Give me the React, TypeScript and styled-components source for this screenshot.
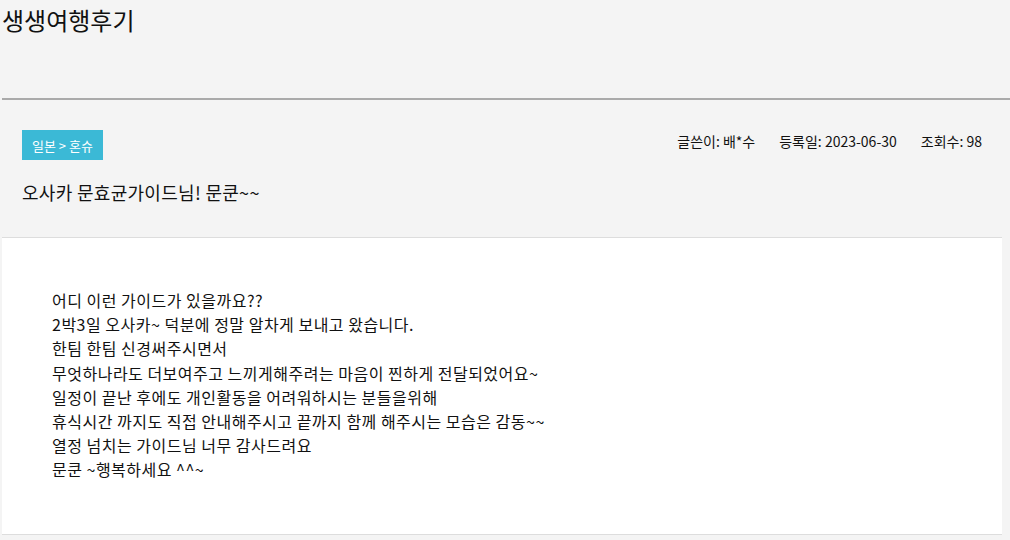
import React from 'react'
import styled, { createGlobalStyle } from 'styled-components'

const GlobalStyle = createGlobalStyle`
  html, body {
    margin: 0;
    padding: 0;
    background: #f4f4f4;
    color: #111;
    font-family: "Noto Sans CJK KR", "Noto Sans", sans-serif;
  }
`

const Page = styled.div`
  width: 1010px;
  padding-left: 2px;
  box-sizing: border-box;
`

const PageTitle = styled.h1`
  margin: 0;
  height: 100px;
  padding-top: 2px;
  box-sizing: border-box;
  font-size: 24px;
  font-weight: 400;
  line-height: 36px;
  border-bottom: 2px solid #aaa;
`

const Board = styled.div`
  width: 1000px;
`

const Info = styled.div`
  padding: 30px 20px 0 20px;
  height: 138px;
  box-sizing: border-box;
  border-bottom: 1px solid #ddd;
`

const InfoTop = styled.div`
  display: flex;
  justify-content: space-between;
  align-items: flex-start;
`

const Category = styled.span`
  display: inline-flex;
  align-items: center;
  height: 30px;
  padding: 0 10px;
  background: #3bb9d6;
  color: #fff;
  font-size: 13px;
`

const Meta = styled.ul`
  display: flex;
  gap: 24px;
  list-style: none;
  margin: 0;
  padding: 0;
  padding-top: 2px;
  font-size: 14px;
  line-height: 18px;
`

const Subject = styled.h2`
  margin: 19px 0 0;
  font-size: 18px;
  font-weight: 400;
  line-height: 26px;
  letter-spacing: 0.3px;
`

const Content = styled.div`
  background: #fff;
  height: 297px;
  box-sizing: border-box;
  padding: 50px 50px 0;
  border-bottom: 1px solid #ddd;
  font-size: 16px;
  letter-spacing: 0.5px;
  line-height: 24.2px;
`

const Line = styled.p`
  margin: 0;
`

const lines = [
  '어디 이런 가이드가 있을까요??',
  '2박3일 오사카~ 덕분에 정말 알차게 보내고 왔습니다.',
  '한팀 한팀 신경써주시면서',
  '무엇하나라도 더보여주고 느끼게해주려는 마음이 찐하게 전달되었어요~',
  '일정이 끝난 후에도 개인활동을 어려워하시는 분들을위해',
  '휴식시간 까지도 직접 안내해주시고 끝까지 함께 해주시는 모습은 감동~~',
  '열정 넘치는 가이드님 너무 감사드려요',
  '문쿤 ~행복하세요 ^^~',
]

export default function App() {
  return (
    <>
      <GlobalStyle />
      <Page>
        <PageTitle>생생여행후기</PageTitle>
        <Board>
          <Info>
            <InfoTop>
              <Category>일본 &gt; 혼슈</Category>
              <Meta>
                <li>글쓴이: 배*수</li>
                <li>등록일: 2023-06-30</li>
                <li>조회수: 98</li>
              </Meta>
            </InfoTop>
            <Subject>오사카 문효균가이드님! 문쿤~~</Subject>
          </Info>
          <Content>
            {lines.map((t, i) => (
              <Line key={i}>{t}</Line>
            ))}
          </Content>
        </Board>
      </Page>
    </>
  )
}
